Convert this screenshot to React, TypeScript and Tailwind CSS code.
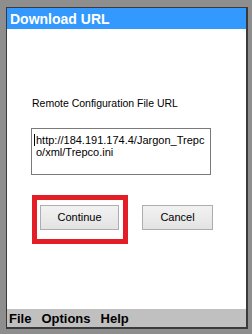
import React from 'react';

const font = { fontFamily: '"Liberation Sans", Arial, sans-serif' };

const WinButton: React.FC<{ label: string; width: string }> = ({ label, width }) => (
  <button
    className={`${width} h-[25px] border border-[#adadad] bg-gradient-to-b from-[#f2f2f2] to-[#e3e3e3] text-[11px] text-black flex items-center justify-center`}
  >
    {label}
  </button>
);

export default function App() {
  return (
    <div
      className="w-[252px] h-[334px] bg-[#8e8e8e] pl-[6px] pt-[7px] pr-[4px] pb-[5px]"
      style={font}
    >
      <div className="w-full h-full flex flex-col border-l border-t border-r-2 border-b-2 border-[#3a3a3a] bg-white">
        {/* title bar */}
        <div className="h-[21px] bg-[#3399ff] flex items-center pl-[3px]">
          <span className="text-white font-bold text-[14px] leading-none">Download URL</span>
        </div>

        {/* body */}
        <div className="flex-1 flex flex-col pl-[24px]">
          <div className="mt-[67px] h-[14px] text-[10.5px] leading-[14px] text-black pl-[1px]">
            Remote Configuration File URL
          </div>

          <div className="mt-[18px] w-[180px] h-[47px] border border-[#7a7a7a] pl-[2px] pt-[5px] text-[11px] leading-[12px] text-black">
            <div className="flex items-start">
              <span className="w-px h-[12px] bg-black mr-px shrink-0" />
              <span>http://184.191.174.4/Jargon_Trepc</span>
            </div>
            <div className="pl-[2px]">o/xml/Trepco.ini</div>
          </div>

          <div className="mt-[30px] flex items-start pl-[9px]">
            <div className="relative">
              <WinButton label="Continue" width="w-[79px]" />
              <div className="absolute -left-[8px] -top-[10px] -right-[9px] -bottom-[14px] border-[5px] border-[#e41e26] pointer-events-none" />
            </div>
            <div className="ml-[23px]">
              <WinButton label="Cancel" width="w-[71px]" />
            </div>
          </div>
        </div>

        {/* menu bar */}
        <div className="h-[18px] bg-[#c0c0c0] flex items-center gap-[10px] pl-[2px] text-[13px] font-bold text-black leading-none">
          <span>File</span>
          <span>Options</span>
          <span>Help</span>
        </div>
      </div>
    </div>
  );
}
